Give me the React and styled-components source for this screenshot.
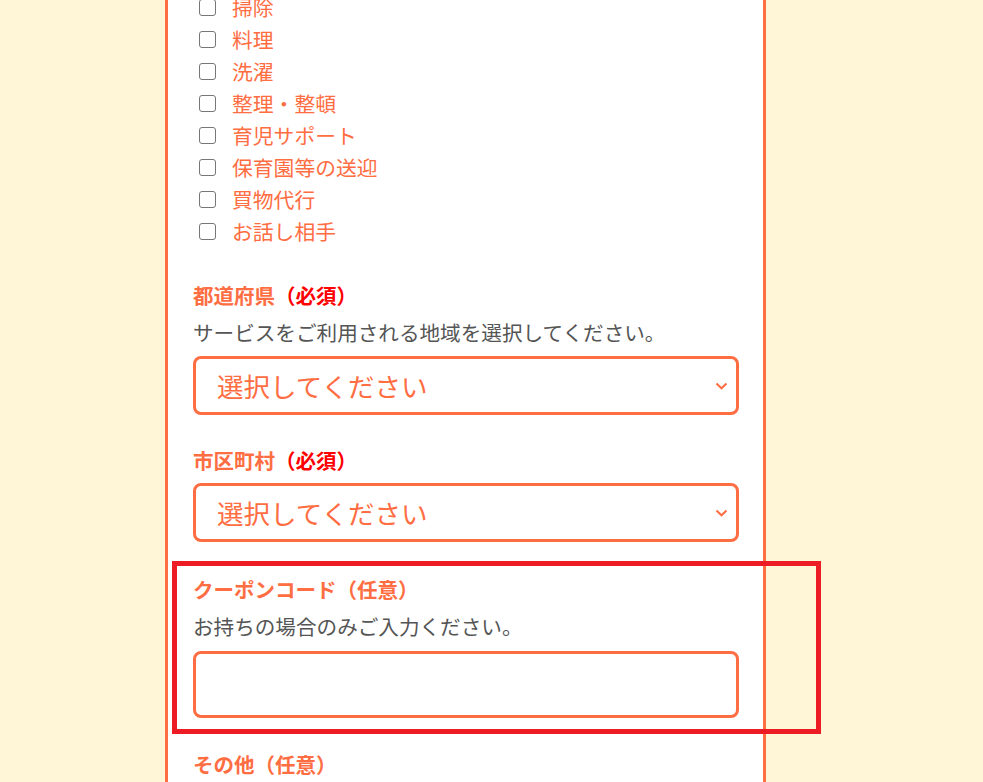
import React from "react";
import styled, { createGlobalStyle } from "styled-components";

const GlobalStyle = createGlobalStyle`
  html, body {
    margin: 0;
    padding: 0;
    background: #fef6d6;
    overflow: hidden;
  }
  body {
    font-family: "Noto Sans CJK JP", "Noto Sans", sans-serif;
  }
`;

const Page = styled.div`
  height: 782px;
  overflow: hidden;
`;

const Card = styled.div`
  width: 601px;
  margin-left: 165px;
  margin-top: -9px;
  box-sizing: border-box;
  background: #fff;
  border-left: 3px solid #ff6d42;
  border-right: 3px solid #ff6d42;
  padding: 0 24px 40px 25px;
  display: flex;
  flex-direction: column;
`;

const CheckList = styled.ul`
  list-style: none;
  margin: 0 0 34px;
  padding: 0 0 0 6px;
`;

const CheckRow = styled.li`
  display: flex;
  align-items: center;
  gap: 16px;
  height: 32px;
  font-size: 20.8px;
  color: #ff6d42;
`;

const Box = styled.span`
  width: 15px;
  height: 15px;
  border: 1.5px solid #767676;
  border-radius: 3px;
  flex: none;
`;

const Field = styled.div`
  position: relative;
  display: flex;
  flex-direction: column;
  margin-bottom: ${(p) => p.$gap || 31}px;
`;

const Label = styled.div`
  font-size: 20.5px;
  line-height: 28px;
  font-weight: 700;
  color: #ff6d42;
  margin-bottom: 9px;
`;

const Req = styled.span`
  color: #f00;
`;

const Desc = styled.div`
  font-size: 20.6px;
  line-height: 28px;
  color: #555;
  margin-bottom: 10px;
`;

const SelectBox = styled.div`
  height: 59px;
  box-sizing: border-box;
  border: 3px solid #ff6d42;
  border-radius: 8px;
  display: flex;
  align-items: center;
  justify-content: space-between;
  padding: 0 8px 0 21px;
  font-size: 26.5px;
  color: #ff6d42;
`;

const TextInput = styled.input`
  height: 67px;
  margin-top: 1px;
  box-sizing: border-box;
  border: 3px solid #ff6d42;
  border-radius: 8px;
  outline: none;
  font-size: 20px;
  padding: 0 16px;
`;

const Highlight = styled.div`
  position: absolute;
  left: -21px;
  top: -14px;
  right: -82px;
  bottom: -16px;
  border: 5px solid #ed1c24;
  pointer-events: none;
`;

const Chevron = () => (
  <svg width="13" height="8" viewBox="0 0 13 8">
    <path d="M1.5 1.5 L6.5 6.3 L11.5 1.5" fill="none" stroke="#ff6d42" strokeWidth="2" />
  </svg>
);

const services = [
  "掃除",
  "料理",
  "洗濯",
  "整理・整頓",
  "育児サポート",
  "保育園等の送迎",
  "買物代行",
  "お話し相手",
];

export default function App() {
  return (
    <Page>
      <GlobalStyle />
      <Card>
        <CheckList>
          {services.map((s) => (
            <CheckRow key={s}>
              <Box />
              {s}
            </CheckRow>
          ))}
        </CheckList>

        <Field>
          <Label>
            都道府県<Req>（必須）</Req>
          </Label>
          <Desc>サービスをご利用される地域を選択してください。</Desc>
          <SelectBox>
            選択してください
            <Chevron />
          </SelectBox>
        </Field>

        <Field $gap={33}>
          <Label>
            市区町村<Req>（必須）</Req>
          </Label>
          <SelectBox>
            選択してください
            <Chevron />
          </SelectBox>
        </Field>

        <Field $gap={32}>
          <Label>クーポンコード（任意）</Label>
          <Desc>お持ちの場合のみご入力ください。</Desc>
          <TextInput />
          <Highlight />
        </Field>

        <Field>
          <Label>その他（任意）</Label>
        </Field>
      </Card>
    </Page>
  );
}
